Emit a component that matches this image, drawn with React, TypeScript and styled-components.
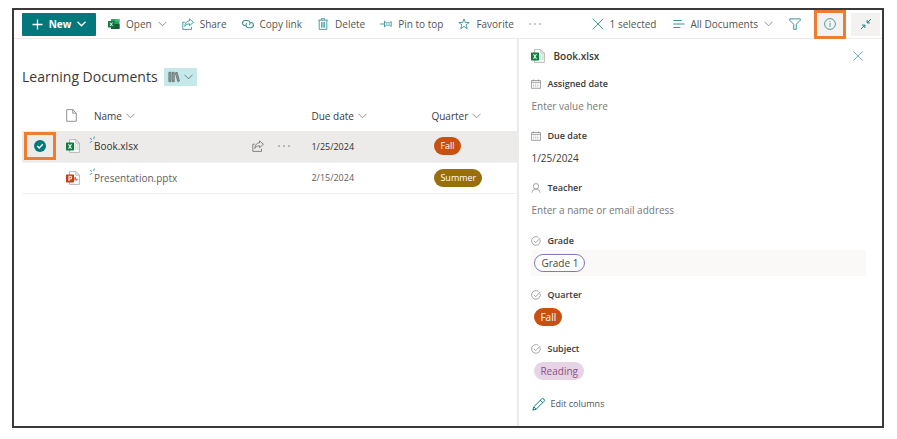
import React from "react";
import styled, { createGlobalStyle, css } from "styled-components";

const teal = "#03787c";
const iconTeal = "#3a9497";
const line = "#edebe9";

const GlobalStyle = createGlobalStyle`
  *, *::before, *::after { box-sizing: border-box; }
  body {
    margin: 0;
    background: #fff;
    color: #3b3a39;
    font: 10px/14px "Segoe UI", "Open Sans", "Noto Sans", sans-serif;
  }
  button, input {
    font: inherit;
    color: inherit;
    background: none;
    border: 0;
    padding: 0;
    margin: 0;
  }
  button { cursor: pointer; }
  svg { display: block; flex: none; }
`;

const Page = styled.div`
  min-height: 100vh;
  padding: 8px 13px 11px 12px;
  display: flex;
`;

const Frame = styled.div`
  flex: 1;
  min-width: 0;
  display: flex;
  flex-direction: column;
  border: 2px solid #3a3a3a;
`;

const CommandBar = styled.header`
  display: flex;
  align-items: center;
  justify-content: space-between;
  height: 29px;
  padding: 0 2px 0 8px;
  border-bottom: 1px solid ${line};
`;

const BarGroup = styled.div<{ $gap: number }>`
  display: flex;
  align-items: center;
  gap: ${(p) => p.$gap}px;
`;

const NewButton = styled.button`
  display: flex;
  align-items: center;
  justify-content: center;
  gap: 6px;
  width: 74px;
  height: 23px;
  margin-right: -3px;
  border-radius: 1px;
  background: ${teal};
  color: #fff;
  font-weight: 700;
`;

const Command = styled.button`
  display: flex;
  align-items: center;
  gap: 6px;
  color: #545352;
  white-space: nowrap;
  svg { color: ${iconTeal}; }
`;

const Muted = styled.span`
  display: flex;
  && svg { color: #8a8886; }
`;

const ToggleGroup = styled.div`
  display: flex;
  align-items: center;
  gap: 8px;
`;

const highlight = css`
  outline: 3px solid #ed7d31;
`;

const IconToggle = styled.button<{ $highlighted?: boolean }>`
  display: grid;
  place-items: center;
  width: ${(p) => (p.$highlighted ? 26 : 29)}px;
  height: 23px;
  background: #f3f2f1;
  color: ${(p) => (p.$highlighted ? iconTeal : teal)};
  ${(p) => p.$highlighted && highlight}
`;

const Content = styled.div`
  flex: 1;
  display: grid;
  grid-template-columns: minmax(0, 58fr) minmax(0, 42fr);
`;

const Library = styled.main`
  padding: 25px 0 0 8px;
`;

const TitleRow = styled.div`
  display: flex;
  align-items: center;
  gap: 6px;
  height: 26px;
`;

const Title = styled.h1`
  margin: 0;
  font-size: 14px;
  line-height: 20px;
  font-weight: 500;
`;

const ViewButton = styled.button`
  display: flex;
  align-items: center;
  gap: 4px;
  height: 18px;
  padding: 0 4px;
  background: #c5e9ea;
  border-radius: 1px;
  color: #6a7273;
`;

const FileTable = styled.table`
  width: 100%;
  margin-top: 10px;
  table-layout: fixed;
  border-collapse: collapse;
  text-align: left;
  td, th { padding: 0; height: 31px; }
`;

const Column = styled.col<{ $width?: number }>`
  width: ${(p) => (p.$width ? `${p.$width}px` : "auto")};
`;

const FileRow = styled.tr<{ $selected?: boolean }>`
  background: ${(p) => (p.$selected ? line : "transparent")};
  color: ${(p) => (p.$selected ? "#323130" : "#605e5c")};
  border-bottom: 1px solid #f3f2f1;
`;

const HeadButton = styled.button`
  display: flex;
  align-items: center;
  gap: 4px;
  font-weight: 500;
`;

const CheckFrame = styled.label<{ $highlighted?: boolean }>`
  display: grid;
  place-items: center;
  width: 26px;
  height: 22px;
  margin-left: 5px;
  ${(p) => p.$highlighted && highlight}
`;

const RowCheck = styled.input`
  appearance: none;
  grid-area: 1 / 1;
  width: 12px;
  height: 12px;
  border-radius: 50%;
  &:checked { background: ${teal}; }
  & + svg { grid-area: 1 / 1; pointer-events: none; visibility: hidden; }
  &:checked + svg { visibility: visible; }
`;

const NameCell = styled.div`
  display: flex;
  align-items: center;
`;

const FileLink = styled.a<{ $selected?: boolean }>`
  position: relative;
  flex: 1;
  color: inherit;
  text-decoration: none;
  font-weight: ${(p) => (p.$selected ? 500 : 400)};
`;

const NewMark = styled.svg`
  position: absolute;
  left: -5px;
  top: -3px;
  color: ${iconTeal};
`;

const RowActions = styled.div`
  display: flex;
  align-items: center;
  gap: 14px;
  margin-right: 21px;
  color: #797775;
`;

const DateText = styled.span`
  font-size: 9px;
`;

type Tone = "fall" | "summer" | "grade" | "reading";

const tones = {
  fall: css`background: #ca5010; color: #fff;`,
  summer: css`background: #986f0b; color: #fff;`,
  grade: css`border: 1px solid #8378b5; background: #fff; color: #484644;`,
  reading: css`background: #e6d3e5; color: #8c5186;`,
};

const Pill = styled.span<{ $tone: Tone; $small?: boolean }>`
  display: inline-flex;
  align-items: center;
  height: 18px;
  padding: 0 6px;
  border-radius: 9px;
  font-size: ${(p) => (p.$small ? 9 : 10)}px;
  ${(p) => tones[p.$tone]}
`;

const PillCell = styled.div`
  display: flex;
  padding-left: 3px;
`;

const Details = styled.aside`
  padding: 8px 16px 0 12px;
  border-left: 2px solid ${line};
`;

const DetailsHead = styled.div`
  display: flex;
  align-items: center;
  gap: 8px;
  height: 18px;
  margin-bottom: 12px;
`;

const DetailsTitle = styled.h2`
  flex: 1;
  margin: 0;
  font-size: 10px;
  font-weight: 600;
`;

const CloseButton = styled.button`
  display: grid;
  place-items: center;
  width: 16px;
  height: 16px;
  color: ${iconTeal};
`;

const FieldGroup = styled.div<{ $gap: number }>`
  display: grid;
  row-gap: ${(p) => p.$gap}px;
  margin-bottom: 11px;
`;

const Field = styled.div`
  display: grid;
  grid-template-rows: 14px 26px;
  row-gap: 2px;
`;

const FieldLabel = styled.label`
  display: flex;
  align-items: center;
  gap: 6px;
  font-size: 9px;
  font-weight: 600;
  svg { color: #8a8886; }
`;

const FieldInput = styled.input`
  width: 100%;
  height: 26px;
  &::placeholder { color: #797775; opacity: 1; }
`;

const ChoiceValue = styled.button<{ $active?: boolean }>`
  display: flex;
  align-items: center;
  width: 100%;
  padding-left: 3px;
  background: ${(p) => (p.$active ? "#faf9f8" : "transparent")};
`;

const EditButton = styled.button`
  display: flex;
  align-items: center;
  gap: 5px;
  margin-top: 13px;
  padding-left: 1px;
  font-size: 9px;
  color: #545352;
  svg { color: ${teal}; }
`;

type IconProps = { size?: number; box?: number; children: React.ReactNode };

const Icon = ({ size = 12, box = 12, children }: IconProps) => (
  <svg
    width={size}
    height={size}
    viewBox={`0 0 ${box} ${box}`}
    fill="none"
    stroke="currentColor"
    strokeWidth="0.9"
    aria-hidden="true"
  >
    {children}
  </svg>
);

const Chevron = ({ strong = false }: { strong?: boolean }) => (
  <svg width="9" height="6" viewBox="0 0 9 6" fill="none" stroke="currentColor" strokeWidth={strong ? 1.3 : 0.9} aria-hidden="true">
    <path d="M.5 .8 4.5 4.8 8.5 .8" />
  </svg>
);

const PlusIcon = () => <Icon size={11}><path strokeWidth="1.4" d="M6 .5v11M.5 6h11" /></Icon>;

const ExcelIcon = () => (
  <svg width="12" height="12" viewBox="0 0 12 12" aria-hidden="true">
    <rect x="3" y="1" width="8.5" height="10" rx=".6" fill="#21a366" />
    <path d="M7.2 1h3.7c.4 0 .6.2.6.6v2H7.2z" fill="#33c481" />
    <path d="M3 6h8.500v4.400c0 .4-.2.600-.6.600H3z" fill="#185c37" />
    <rect x="0" y="3" width="6.500" height="6.500" rx=".5" fill="#107c41" />
    <path d="M2 4.500 4.500 8M4.500 4.500 2 8" stroke="#fff" strokeWidth=".9" />
  </svg>
);

const ShareIcon = () => (
  <Icon>
    <path d="M2.800 4.200H.8v7.200h8.700V8.800M7.500.9 11.500 4.300 7.500 7.700V5.800C5.300 5.800 3.900 6.600 2.800 8.400 3 5.200 4.600 3 7.500 2.800z" />
  </Icon>
);

const LinkIcon = () => (
  <Icon>
    <path strokeWidth="1.1" d="M4.300 7.700H3.200a2.600 2.600 0 0 1 0-5.200h2.200a2.600 2.600 0 0 1 1.800 4.500M7.700 4.500h1.100a2.600 2.600 0 0 1 0 5.200H6.600a2.600 2.600 0 0 1-1.800-4.500" />
  </Icon>
);

const TrashIcon = () => (
  <Icon>
    <path d="M1.200 2.200h9.600M4.300 2V.7h3.400V2M2.200 2.400v9h7.600v-9M4.600 4v5.700M6 4v5.700M7.400 4v5.700" />
  </Icon>
);

const PinIcon = () => (
  <Icon>
    <path d="M0 6h4.500M4.500 2.800v6.400M4.500 4.200h1.200l.9.700h3l1.600-1.300v4.800L9.600 7.100h-3l-.9.700H4.500" />
  </Icon>
);

const StarIcon = () => (
  <Icon>
    <path d="M6 .9 7.300 4.500H11.200L8.100 6.800 9.200 10.700 6 8.400 2.800 10.700 3.900 6.800.8 4.500H4.700z" />
  </Icon>
);

const DotsIcon = () => (
  <Icon>
    <g fill="currentColor" stroke="none">
      <circle cx="1" cy="6" r=".8" /><circle cx="6" cy="6" r=".8" /><circle cx="11" cy="6" r=".8" />
    </g>
  </Icon>
);

const CrossIcon = ({ size = 12 }: { size?: number }) => <Icon size={size}><path d="M.7.7 11.300 11.300M11.300.7.7 11.300" /></Icon>;

const LinesIcon = () => <Icon><path strokeWidth="1.100" d="M.3 2.500h8.400M.3 6h11.400M.3 9.500h7.200" /></Icon>;

const FilterIcon = () => <Icon><path strokeWidth="1" d="M.7.9h10.600v1.300L7.300 6.300v5H4.700v-5L.7 2.200z" /></Icon>;

const InfoIcon = () => (
  <Icon>
    <circle cx="6" cy="6" r="5.400" /><path d="M6 5v3.800M6 3.100v1" />
  </Icon>
);

const CollapseIcon = () => (
  <Icon>
    <path d="M11 1 7.300 4.700M7.100 2v2.900H10M1 11 4.700 7.300M4.900 10V7.100H2" />
  </Icon>
);

const BooksIcon = () => (
  <Icon>
    <path d="M.9 1.300h2v9.400h-2zM4.200 1.300h2v9.400h-2zM7.400 1.900l1.700-.6 2.300 8.700-1.600.7z" fill="#8fa3a4" />
  </Icon>
);

const PageIcon = () => (
  <svg width="11" height="13" viewBox="0 0 11 13" fill="none" stroke="#8a8886" strokeWidth=".9" aria-hidden="true">
    <path d="M.7.600h6l3.600 3.600v8.100H.7zM6.700.6v3.600h3.600" />
  </svg>
);

const FileIcon = ({ kind }: { kind: "xlsx" | "pptx" }) => {
  const color = kind === "xlsx" ? "#107c41" : "#c43e1c";
  return (
    <svg width="14" height="14" viewBox="0 0 14 14" fill="none" aria-hidden="true">
      <path d="M3.500.6h6.400l3.500 3.500v9.300H3.500z" fill="#fff" stroke="#a8a6a4" strokeWidth=".8" />
      <path d="M9.900.6v3.500h3.500" stroke="#a8a6a4" strokeWidth=".8" />
      {kind === "xlsx"
        ? <path d="M8.500 6h1.700M10.900 6h1.500M8.500 8h1.700M10.900 8h1.500M8.500 10h1.700M10.900 10h1.500" stroke="#8fd0ad" />
        : <path d="M10 5.800v2h2a2 2 0 1 1-2-2z" fill="#ed6c47" />}
      <rect y="3.500" width="8" height="8" rx=".7" fill={color} />
      {kind === "xlsx"
        ? <path d="m2.500 5.300 3 4.400M5.500 5.300l-3 4.400" stroke="#fff" strokeWidth="1.100" />
        : <path d="M3 9.900V5.300h1.300a1.300 1.300 0 0 1 0 2.700H3" stroke="#fff" strokeWidth="1.100" />}
    </svg>
  );
};

const CalendarIcon = () => (
  <Icon size={10}>
    <path d="M.6 1.800h10.800v9.400H.6zM.6 4h10.800M3 .6v2M9 .6v2" />
    <path strokeDasharray="1.200 1" strokeWidth=".6" d="M2.500 6h7.200M2.500 7.800h7.200M2.500 9.500h7.200" />
  </Icon>
);

const PersonIcon = () => (
  <Icon size={10}><circle cx="6" cy="4" r="3.300" /><path d="M1.300 11.600C1.500 9 3.300 7.300 6 7.300s4.500 1.700 4.700 4.300" /></Icon>
);

const ChoiceIcon = () => (
  <Icon size={10}>
    <path d="M10.800 4.200A5.200 5.200 0 1 1 8.800 1.600M3.400 5.800 5.600 8 11.200 2.300" />
  </Icon>
);

const PencilIcon = () => (
  <Icon size={13}>
    <path d="M.8 11.200 1.600 8.200 8.800 1a1.550 1.550 0 0 1 2.200 2.200L3.800 10.400zM7.700 2.100l2.200 2.200M1.600 8.200l2.200 2.200" />
  </Icon>
);

const files = [
  { name: "Book.xlsx", kind: "xlsx", due: "1/25/2024", quarter: "Fall", tone: "fall", selected: true },
  { name: "Presentation.pptx", kind: "pptx", due: "2/15/2024", quarter: "Summer", tone: "summer", selected: false },
] as const;

const choices = [
  { id: "grade", label: "Grade", value: "Grade 1", tone: "grade", active: true },
  { id: "quarter", label: "Quarter", value: "Fall", tone: "fall", active: false },
  { id: "subject", label: "Subject", value: "Reading", tone: "reading", active: false },
] as const;

export default function App() {
  return (
    <>
      <GlobalStyle />
      <Page>
        <Frame>
          <CommandBar>
            <BarGroup $gap={15}>
              <NewButton><PlusIcon />New<Chevron strong /></NewButton>
              <Command><ExcelIcon />Open<Muted><Chevron /></Muted></Command>
              <Command><ShareIcon />Share</Command>
              <Command><LinkIcon />Copy link</Command>
              <Command><TrashIcon />Delete</Command>
              <Command><PinIcon />Pin to top</Command>
              <Command><StarIcon />Favorite</Command>
              <Command aria-label="More commands"><Muted><DotsIcon /></Muted></Command>
            </BarGroup>
            <BarGroup $gap={16}>
              <Command><CrossIcon />1 selected</Command>
              <Command><LinesIcon />All Documents<Muted><Chevron /></Muted></Command>
              <Command aria-label="Filter"><FilterIcon /></Command>
              <ToggleGroup>
                <IconToggle $highlighted aria-label="Details"><InfoIcon /></IconToggle>
                <IconToggle aria-label="Collapse"><CollapseIcon /></IconToggle>
              </ToggleGroup>
            </BarGroup>
          </CommandBar>
          <Content>
            <Library>
              <TitleRow>
                <Title>Learning Documents</Title>
                <ViewButton aria-label="Library views"><BooksIcon /><Chevron /></ViewButton>
              </TitleRow>
              <FileTable>
                <colgroup>
                  <Column $width={44} />
                  <Column $width={28} />
                  <Column />
                  <Column $width={120} />
                  <Column $width={86} />
                </colgroup>
                <thead>
                  <tr>
                    <th aria-label="Selected" />
                    <th aria-label="File type"><PageIcon /></th>
                    <th><HeadButton>Name<Muted><Chevron /></Muted></HeadButton></th>
                    <th><HeadButton>Due date<Muted><Chevron /></Muted></HeadButton></th>
                    <th><HeadButton>Quarter<Muted><Chevron /></Muted></HeadButton></th>
                  </tr>
                </thead>
                <tbody>
                  {files.map((file) => (
                    <FileRow key={file.name} $selected={file.selected}>
                      <td>
                        <CheckFrame $highlighted={file.selected}>
                          <RowCheck type="checkbox" defaultChecked={file.selected} aria-label={`Select ${file.name}`} />
                          <svg width="12" height="12" viewBox="0 0 11 11" fill="none" stroke="#fff" strokeWidth="1.300" aria-hidden="true">
                            <path d="M3 5.500 4.800 7.300 8.100 4" />
                          </svg>
                        </CheckFrame>
                      </td>
                      <td><FileIcon kind={file.kind} /></td>
                      <td>
                        <NameCell>
                          <FileLink href="#" $selected={file.selected}>
                            <NewMark width="8" height="8" viewBox="0 0 8 8" fill="none" stroke="currentColor" strokeWidth=".9" aria-hidden="true">
                              <path d="M.8 2.200 3 3.500M5.500.5 4.600 3M.8 6.500 3.200 5.300" />
                            </NewMark>
                            {file.name}
                          </FileLink>
                          {file.selected && (
                            <RowActions>
                              <button aria-label="Share file"><ShareIcon /></button>
                              <button aria-label="More actions"><DotsIcon /></button>
                            </RowActions>
                          )}
                        </NameCell>
                      </td>
                      <td><DateText>{file.due}</DateText></td>
                      <td><PillCell><Pill $tone={file.tone} $small>{file.quarter}</Pill></PillCell></td>
                    </FileRow>
                  ))}
                </tbody>
              </FileTable>
            </Library>
            <Details>
              <DetailsHead>
                <FileIcon kind="xlsx" />
                <DetailsTitle>Book.xlsx</DetailsTitle>
                <CloseButton aria-label="Close details"><CrossIcon size={10} /></CloseButton>
              </DetailsHead>
              <FieldGroup $gap={10}>
                <Field>
                  <FieldLabel htmlFor="assigned"><CalendarIcon />Assigned date</FieldLabel>
                  <FieldInput id="assigned" placeholder="Enter value here" />
                </Field>
                <Field>
                  <FieldLabel htmlFor="due"><CalendarIcon />Due date</FieldLabel>
                  <FieldInput id="due" defaultValue="1/25/2024" />
                </Field>
                <Field>
                  <FieldLabel htmlFor="teacher"><PersonIcon />Teacher</FieldLabel>
                  <FieldInput id="teacher" placeholder="Enter a name or email address" />
                </Field>
              </FieldGroup>
              <FieldGroup $gap={12}>
                {choices.map((choice) => (
                  <Field key={choice.id}>
                    <FieldLabel htmlFor={choice.id}><ChoiceIcon />{choice.label}</FieldLabel>
                    <ChoiceValue id={choice.id} $active={choice.active}>
                      <Pill $tone={choice.tone}>{choice.value}</Pill>
                    </ChoiceValue>
                  </Field>
                ))}
              </FieldGroup>
              <EditButton><PencilIcon />Edit columns</EditButton>
            </Details>
          </Content>
        </Frame>
      </Page>
    </>
  );
}
